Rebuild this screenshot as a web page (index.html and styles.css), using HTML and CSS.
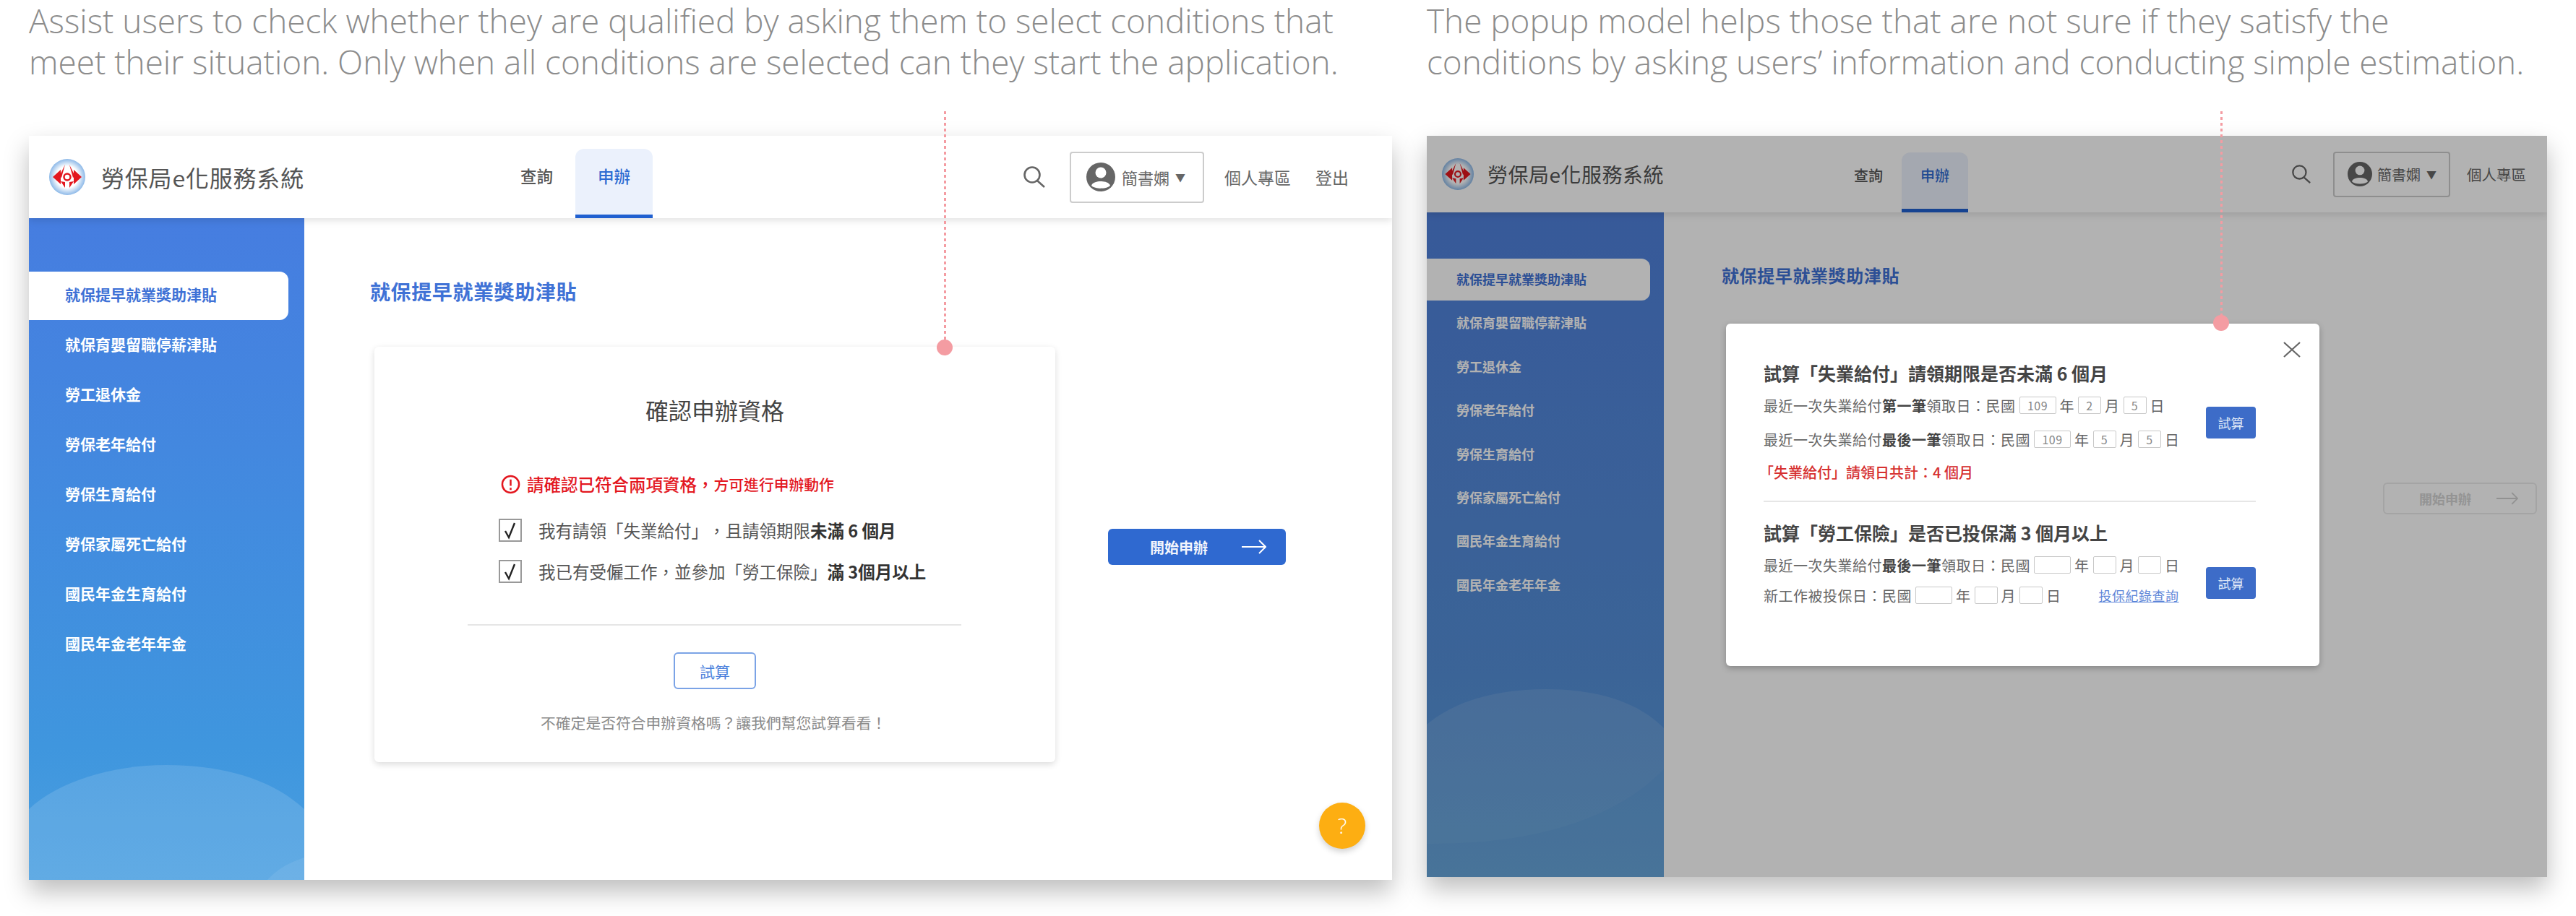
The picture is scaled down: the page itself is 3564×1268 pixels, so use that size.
FILE: index.html
```html
<!DOCTYPE html>
<html lang="zh-Hant">
<head>
    <meta charset="UTF-8">
    <title>勞保局e化服務系統</title>
    <link rel="stylesheet" href="styles.css">
</head>
<body>
    <div class="page">
        <section class="col col-left">
            <p class="caption">Assist users to check whether they are qualified by asking them to select conditions that<br>meet their situation. Only when all conditions are selected can they start the application.</p>
            <div class="frame">
                <header class="topbar">
                    <div class="brand">
                        <svg class="logo" viewBox="0 0 50 50">
                            <defs>
                                <radialGradient id="ring1"><stop offset="0.6" stop-color="#ffffff"/><stop offset="1" stop-color="#8db9e8"/></radialGradient>
                            </defs>
                            <circle cx="25" cy="25" r="25" fill="url(#ring1)"/>
                            <path d="M16 15 L5 25 L16 35 Z M34 15 L45 25 L34 35 Z" fill="#e3171f"/>
                            <path d="M22 8 L14 24 L17 26 Z M28 8 L36 24 L33 26 Z M16 31 L22 40 L22 32 Z M34 31 L28 40 L28 32 Z" fill="#e3171f"/>
                            <circle cx="25" cy="25" r="4.5" fill="none" stroke="#e3171f" stroke-width="2.5"/>
                        </svg>
                        <span class="brand-name">勞保局e化服務系統</span>
                    </div>
                    <nav class="tabs">
                        <a class="tab">查詢</a>
                        <a class="tab active">申辦</a>
                    </nav>
                    <div class="tools">
                        <svg class="search" viewBox="0 0 32 30" fill="none" stroke="#666" stroke-width="2.6"><circle cx="13" cy="12" r="10.5"/><path d="M20 20 L30 29"/></svg>
                        <div class="user">
                            <svg class="avatar" viewBox="0 0 40 40"><circle cx="20" cy="20" r="20" fill="#666"/><circle cx="20" cy="14" r="7.5" fill="#fff"/><path d="M7 32 C9 24 31 24 33 32 C28 37 12 37 7 32 Z" fill="#fff"/></svg>
                            <span class="user-name">簡書嫻</span>
                            <span class="caret">▼</span>
                        </div>
                        <a class="tool-link">個人專區</a>
                        <a class="tool-link">登出</a>
                    </div>
                </header>
                <div class="body">
                    <aside class="sidebar">
                        <svg class="waves" viewBox="0 0 381 916" preserveAspectRatio="none">
                            <path d="M0 818 C40 780 115 757 190 757 C265 757 335 775 381 818 L381 916 L0 916 Z" fill="#fff" opacity="0.13"/>
                            <path d="M330 916 C350 895 368 890 381 885 L381 916 Z" fill="#fff" opacity="0.08"/>
                        </svg>
                        <a class="side-item active">就保提早就業獎助津貼</a>
                        <a class="side-item">就保育嬰留職停薪津貼</a>
                        <a class="side-item">勞工退休金</a>
                        <a class="side-item">勞保老年給付</a>
                        <a class="side-item">勞保生育給付</a>
                        <a class="side-item">勞保家屬死亡給付</a>
                        <a class="side-item">國民年金生育給付</a>
                        <a class="side-item">國民年金老年年金</a>
                    </aside>
                    <main class="main">
                        <h1 class="page-title">就保提早就業獎助津貼</h1>
                        <div class="apply-row">
                            <div class="card">
                                <h2 class="card-title">確認申辦資格</h2>
                                <div class="warning">
                                    <svg class="warn-icon" viewBox="0 0 28 28" fill="none" stroke="#e3171f" stroke-width="2.6"><circle cx="14" cy="14" r="12"/><path d="M14 7 V16 M14 19 V22"/></svg>
                                    <span class="warn-main">請確認已符合兩項資格，</span><span class="warn-sub">方可進行申辦動作</span>
                                </div>
                                <div class="check-row">
                                    <svg class="checkbox" viewBox="0 0 32 32" fill="none"><rect x="1" y="1" width="30" height="30" fill="#fff" stroke="#999" stroke-width="2"/><path d="M9 17 L14 26 L22 6" stroke="#222" stroke-width="2.4"/></svg>
                                    <span>我有請領「失業給付」，且請領期限<b>未滿 6 個月</b></span>
                                </div>
                                <div class="check-row">
                                    <svg class="checkbox" viewBox="0 0 32 32" fill="none"><rect x="1" y="1" width="30" height="30" fill="#fff" stroke="#999" stroke-width="2"/><path d="M9 17 L14 26 L22 6" stroke="#222" stroke-width="2.4"/></svg>
                                    <span>我已有受僱工作，並參加「勞工保險」<b>滿 3個月以上</b></span>
                                </div>
                                <hr class="card-line">
                                <button class="try-btn">試算</button>
                                <p class="card-note">不確定是否符合申辦資格嗎？讓我們幫您試算看看！</p>
                            </div>
                            <button class="start-btn">
                                <span>開始申辦</span>
                                <svg class="arrow" viewBox="0 0 34 20" fill="none" stroke="#fff" stroke-width="2"><path d="M0 10 H33 M24 1 L33 10 L24 19"/></svg>
                            </button>
                        </div>
                    </main>
                </div>
                <a class="help">?</a>
            </div>
            <div class="pin pin-left"></div>
        </section>

        <section class="col col-right">
            <p class="caption">The popup model helps those that are not sure if they satisfy the<br>conditions by asking users’ information and conducting simple estimation.</p>
            <div class="frame frame-small">
                <header class="topbar">
                    <div class="brand">
                        <svg class="logo" viewBox="0 0 50 50">
                            <defs>
                                <radialGradient id="ring2"><stop offset="0.6" stop-color="#ffffff"/><stop offset="1" stop-color="#8db9e8"/></radialGradient>
                            </defs>
                            <circle cx="25" cy="25" r="25" fill="url(#ring2)"/>
                            <path d="M16 15 L5 25 L16 35 Z M34 15 L45 25 L34 35 Z" fill="#e3171f"/>
                            <path d="M22 8 L14 24 L17 26 Z M28 8 L36 24 L33 26 Z M16 31 L22 40 L22 32 Z M34 31 L28 40 L28 32 Z" fill="#e3171f"/>
                            <circle cx="25" cy="25" r="4.5" fill="none" stroke="#e3171f" stroke-width="2.5"/>
                        </svg>
                        <span class="brand-name">勞保局e化服務系統</span>
                    </div>
                    <nav class="tabs">
                        <a class="tab">查詢</a>
                        <a class="tab active">申辦</a>
                    </nav>
                    <div class="tools">
                        <svg class="search" viewBox="0 0 32 30" fill="none" stroke="#666" stroke-width="2.6"><circle cx="13" cy="12" r="10.5"/><path d="M20 20 L30 29"/></svg>
                        <div class="user">
                            <svg class="avatar" viewBox="0 0 40 40"><circle cx="20" cy="20" r="20" fill="#666"/><circle cx="20" cy="14" r="7.5" fill="#fff"/><path d="M7 32 C9 24 31 24 33 32 C28 37 12 37 7 32 Z" fill="#fff"/></svg>
                            <span class="user-name">簡書嫻</span>
                            <span class="caret">▼</span>
                        </div>
                        <a class="tool-link">個人專區</a>
                        <a class="tool-link">登出</a>
                    </div>
                </header>
                <div class="body">
                    <aside class="sidebar">
                        <svg class="waves" viewBox="0 0 328 920" preserveAspectRatio="none">
                            <path d="M0 709 C40 675 100 660 165 660 C230 660 290 675 328 714 L328 771 C270 830 170 875 0 874 Z" fill="#fff" opacity="0.1"/>
                            <path d="M0 874 C170 875 270 830 328 771 L328 920 L0 920 Z" fill="#fff" opacity="0.07"/>
                        </svg>
                        <a class="side-item active">就保提早就業獎助津貼</a>
                        <a class="side-item">就保育嬰留職停薪津貼</a>
                        <a class="side-item">勞工退休金</a>
                        <a class="side-item">勞保老年給付</a>
                        <a class="side-item">勞保生育給付</a>
                        <a class="side-item">勞保家屬死亡給付</a>
                        <a class="side-item">國民年金生育給付</a>
                        <a class="side-item">國民年金老年年金</a>
                    </aside>
                    <main class="main">
                        <h1 class="page-title">就保提早就業獎助津貼</h1>
                        <div class="apply-row">
                            <button class="start-btn">
                                <span>開始申辦</span>
                                <svg class="arrow" viewBox="0 0 34 20" fill="none" stroke="#fff" stroke-width="2"><path d="M0 10 H33 M24 1 L33 10 L24 19"/></svg>
                            </button>
                        </div>
                    </main>
                </div>
                <div class="dim"></div>
                <div class="modal">
                    <svg class="close" viewBox="0 0 24 22" fill="none" stroke="#666" stroke-width="2.2"><path d="M1 1 L23 21 M23 1 L1 21"/></svg>
                    <div class="calc">
                        <h3 class="calc-title">試算「失業給付」請領期限是否未滿 6 個月</h3>
                        <div class="calc-body">
                            <div class="calc-rows">
                                <div class="calc-row">最近一次失業給付<b>第一筆</b>領取日：民國<span class="field wide">109</span>年<span class="field">2</span>月<span class="field">5</span>日</div>
                                <div class="calc-row">最近一次失業給付<b>最後一筆</b>領取日：民國<span class="field wide">109</span>年<span class="field">5</span>月<span class="field">5</span>日</div>
                            </div>
                            <button class="calc-btn">試算</button>
                        </div>
                        <p class="calc-result">「失業給付」請領日共計：4 個月</p>
                    </div>
                    <hr class="calc-line">
                    <div class="calc">
                        <h3 class="calc-title">試算「勞工保險」是否已投保滿 3 個月以上</h3>
                        <div class="calc-body">
                            <div class="calc-rows tight">
                                <div class="calc-row">最近一次失業給付<b>最後一筆</b>領取日：民國<span class="field wide"></span>年<span class="field"></span>月<span class="field"></span>日</div>
                                <div class="calc-row">新工作被投保日：民國<span class="field wide"></span>年<span class="field"></span>月<span class="field"></span>日<a class="calc-link">投保紀錄查詢</a></div>
                            </div>
                            <button class="calc-btn">試算</button>
                        </div>
                    </div>
                </div>
            </div>
            <div class="pin pin-right"></div>
        </section>
    </div>
</body>
</html>
```

FILE: styles.css
```css
* {
    box-sizing: border-box;
}
body {
    margin: 0;
    background-color: #ffffff;
    font-family: "Noto Sans CJK TC", "Noto Sans", sans-serif;
    color: #555555;
    text-spacing-trim: space-all;
}
.page {
    display: flex;
    width: 3564px;
    height: 1268px;
    overflow: hidden;
    padding-left: 40px;
}
.col {
    position: relative;
}
.col-left {
    width: 1886px;
    margin-right: 48px;
}
.col-right {
    width: 1550px;
}
.caption {
    margin: 0;
    height: 188px;
    font-family: "Open Sans", sans-serif;
    font-weight: 300;
    font-size: 45.9px;
    line-height: 57px;
    color: #8c8c8c;
    white-space: nowrap;
}

/* frame */
.frame {
    position: relative;
    height: 1030px;
    background-color: #ffffff;
    box-shadow: 0 16px 32px rgba(0, 0, 0, 0.26);
    overflow: hidden;
}
.frame-small {
    height: 1026px;
}
.topbar {
    display: flex;
    align-items: center;
    height: 114px;
    box-shadow: 0 3px 10px rgba(0, 0, 0, 0.12);
    position: relative;
    z-index: 1;
}
.brand {
    display: flex;
    align-items: center;
    width: 649px;
    padding-left: 28px;
    flex-shrink: 0;
}
.logo {
    width: 50px;
    height: 50px;
    margin-right: 22px;
}
.brand-name {
    font-size: 32px;
    letter-spacing: 0.8px;
    color: #555555;
    white-space: nowrap;
}
.tabs {
    display: flex;
    align-self: flex-end;
    height: 96px;
    width: 726px;
    flex-shrink: 0;
}
.tab {
    width: 107px;
    font-size: 22.5px;
    font-weight: 500;
    text-align: center;
    line-height: 74px;
    border-radius: 12px 12px 0 0;
    color: #555555;
}
.tab.active {
    background-color: #ebf1fc;
    color: #2d6bd2;
    border-bottom: 5px solid #2060d0;
}
.tools {
    display: flex;
    align-items: center;
    flex-shrink: 0;
}
.search {
    width: 32px;
    height: 30px;
    margin-right: 33px;
}
.user {
    display: flex;
    align-items: center;
    width: 186px;
    height: 71px;
    padding-left: 21px;
    border: 2px solid #cccccc;
    border-radius: 4px;
    margin-right: 28px;
}
.avatar {
    width: 40px;
    height: 40px;
    margin-right: 9px;
}
.user-name {
    font-size: 22px;
    color: #666666;
}
.caret {
    font-size: 14px;
    margin-left: 8px;
    color: #666666;
}
.tool-link {
    font-size: 23px;
    color: #666666;
    margin-right: 34px;
    white-space: nowrap;
}
.body {
    display: flex;
    height: 916px;
}
.sidebar {
    position: relative;
    display: flex;
    flex-direction: column;
    width: 381px;
    flex-shrink: 0;
    padding-top: 74px;
    background: linear-gradient(180deg, #467de0 0%, #3f96de 80%, #4a9fe0 100%);
}
.waves {
    position: absolute;
    left: 0;
    top: 0;
    width: 100%;
    height: 100%;
}
.side-item {
    position: relative;
    display: block;
    height: 67px;
    margin-bottom: 2px;
    padding-left: 50px;
    font-size: 21px;
    font-weight: 700;
    line-height: 63px;
    color: #ffffff;
}
.side-item.active {
    width: 359px;
    background-color: #ffffff;
    color: #3f72d6;
    border-radius: 0 12px 12px 0;
}
.main {
    flex: 1;
    padding: 76px 0 0 91px;
}
.page-title {
    margin: 0 0 52px;
    font-size: 28px;
    font-weight: 700;
    line-height: 50px;
    letter-spacing: 0.6px;
    color: #3f72d6;
}
.apply-row {
    display: flex;
    align-items: flex-start;
    margin-left: 6px;
}
.card {
    width: 942px;
    height: 575px;
    flex-shrink: 0;
    padding: 61px 0 0 172px;
    background-color: #ffffff;
    border-radius: 6px;
    box-shadow: 0 3px 10px rgba(0, 0, 0, 0.14);
}
.card-title {
    margin: 0 0 61px -172px;
    font-size: 32px;
    font-weight: 400;
    line-height: 52px;
    text-align: center;
    color: #444444;
}
.warning {
    display: flex;
    align-items: center;
    height: 32px;
    margin-left: 3px;
    margin-bottom: 31px;
    color: #e3171f;
}
.warn-icon {
    width: 27px;
    height: 27px;
    margin-right: 9px;
}
.warn-main {
    font-size: 23.5px;
    font-weight: 500;
}
.warn-sub {
    font-size: 20.8px;
    font-weight: 500;
}
.check-row {
    display: flex;
    align-items: center;
    height: 34px;
    margin-bottom: 23px;
    font-size: 23.5px;
    color: #555555;
}
.checkbox {
    width: 32px;
    height: 32px;
    margin-right: 23px;
}
.check-row b {
    font-weight: 700;
    color: #333333;
}
.card-line {
    width: 683px;
    height: 2px;
    margin: 56px 0 37px -43px;
    border: 0;
    background-color: #e6e6e6;
}
.try-btn {
    display: block;
    width: 114px;
    height: 51px;
    margin-left: 242px;
    padding: 0;
    background-color: #ffffff;
    border: 2px solid #7ba3e6;
    border-radius: 6px;
    font-family: inherit;
    font-size: 21px;
    color: #4a7fdc;
}
.card-note {
    margin: 30px 0 0 58px;
    font-size: 20.8px;
    line-height: 32px;
    color: #8a8a8a;
    white-space: nowrap;
}
.start-btn {
    display: flex;
    align-items: center;
    justify-content: space-between;
    width: 246px;
    height: 50px;
    flex-shrink: 0;
    margin: 252px 0 0 73px;
    padding: 0 27px 0 58px;
    background-color: #2f69d0;
    border: 0;
    border-radius: 6px;
    font-family: inherit;
    font-size: 20px;
    font-weight: 700;
    color: #f2f5fc;
}
.arrow {
    width: 34px;
    height: 20px;
}
.help {
    position: absolute;
    left: 1785px;
    top: 923px;
    z-index: 1;
    width: 64px;
    height: 64px;
    background-color: #fdae12;
    border-radius: 50%;
    box-shadow: 0 4px 8px rgba(0, 0, 0, 0.18);
    font-family: "Open Sans", sans-serif;
    font-weight: 300;
    font-size: 30px;
    line-height: 64px;
    text-align: center;
    color: #ffffff;
}

/* second frame is the same screen, a bit smaller and dimmed */
.frame-small .topbar {
    height: 106px;
}
.frame-small .brand {
    width: 565px;
    padding-left: 21px;
}
.frame-small .logo {
    width: 44px;
    height: 44px;
    margin-right: 19px;
}
.frame-small .brand-name {
    font-size: 28px;
    letter-spacing: 0.5px;
}
.frame-small .tabs {
    width: 631px;
    height: 83px;
}
.frame-small .tab {
    width: 92px;
    font-size: 20px;
    line-height: 64px;
}
.frame-small .search {
    width: 28px;
    height: 26px;
    margin-right: 30px;
}
.frame-small .user {
    width: 162px;
    height: 63px;
    padding-left: 18px;
    margin-right: 23px;
}
.frame-small .avatar {
    width: 34px;
    height: 34px;
    margin-right: 7px;
}
.frame-small .user-name {
    font-size: 20px;
}
.frame-small .tool-link {
    font-size: 20.5px;
    margin-right: 30px;
}
.frame-small .sidebar {
    width: 328px;
    padding-top: 64px;
    height: 920px;
    background: linear-gradient(180deg, #5081dc 0%, #5590d9 70%, #5ca0da 100%);
}
.frame-small .side-item {
    height: 58px;
    margin-bottom: 2.4px;
    padding-left: 41px;
    font-size: 18px;
    line-height: 56px;
}
.frame-small .side-item.active {
    width: 309px;
}
.frame-small .main {
    padding: 66px 0 0 80px;
}
.frame-small .page-title {
    font-size: 24px;
    line-height: 42px;
    margin-bottom: 266px;
}
.frame-small .apply-row {
    margin-left: 0;
}
.frame-small .start-btn {
    width: 213px;
    height: 44px;
    margin: 0 0 0 915px;
    padding: 0 24px 0 48px;
    font-size: 18px;
    background-color: #ffffff;
    border: 2px solid #ebebeb;
    color: #d4d4d4;
}
.frame-small .arrow {
    width: 30px;
    height: 18px;
}
.frame-small .arrow path {
    stroke: #d0d0d0;
}
.dim {
    position: absolute;
    left: 0;
    top: 0;
    right: 0;
    bottom: 0;
    z-index: 2;
    background-color: rgba(0, 0, 0, 0.3);
}
.modal {
    position: absolute;
    left: 414px;
    top: 260px;
    z-index: 3;
    width: 821px;
    height: 474px;
    padding: 51px 88px 0 52px;
    background-color: #ffffff;
    border-radius: 6px;
    box-shadow: 0 3px 8px rgba(0, 0, 0, 0.25);
}
.close {
    position: absolute;
    right: 26px;
    top: 25px;
    width: 24px;
    height: 22px;
}
.calc-title {
    margin: 0;
    font-size: 25px;
    font-weight: 700;
    line-height: 34px;
    color: #444444;
}
.calc-body {
    display: flex;
    align-items: center;
    justify-content: space-between;
    margin-top: 16px;
}
.calc-rows {
    display: flex;
    flex-direction: column;
    gap: 23px;
}
.calc-rows.tight {
    gap: 18px;
}
.calc-rows.tight + .calc-btn {
    margin-top: 8px;
}
.calc-row {
    display: flex;
    align-items: center;
    height: 24px;
    font-size: 20px;
    letter-spacing: 0.5px;
    color: #666666;
    white-space: nowrap;
}
.calc-row b {
    font-weight: 700;
    color: #444444;
}
.field {
    display: block;
    width: 32px;
    height: 24px;
    margin: 0 5px;
    border: 1px solid #c8c8c8;
    border-radius: 2px;
    font-size: 16px;
    line-height: 22px;
    text-align: center;
    color: #888888;
}
.field.wide {
    width: 51px;
}
.calc-btn {
    width: 69px;
    height: 44px;
    padding: 0;
    background-color: #3d6cc8;
    border: 0;
    border-radius: 4px;
    font-family: inherit;
    font-size: 18px;
    color: #dfe7f6;
}
.calc-result {
    margin: 20px 0 0 -6px;
    font-size: 20px;
    font-weight: 500;
    line-height: 28px;
    color: #d63030;
}
.calc-line {
    width: 681px;
    height: 2px;
    margin: 25px 0 25px;
    border: 0;
    background-color: #e6e6e6;
}
.calc-link {
    margin-left: 52px;
    font-size: 18px;
    color: #5d86d8;
    text-decoration: underline;
}

/* pink annotation pins */
.pin {
    position: absolute;
    top: 154px;
    z-index: 5;
    width: 22px;
    background: repeating-linear-gradient(180deg, #f49ca2 0 4px, transparent 4px 8px) center top / 3px 100% no-repeat;
}
.pin::after {
    content: "";
    position: absolute;
    left: 0;
    bottom: 0;
    width: 22px;
    height: 22px;
    border-radius: 50%;
    background-color: #f49ca2;
}
.pin-left {
    left: 1256px;
    height: 338px;
}
.pin-right {
    left: 1088px;
    height: 304px;
}
```
